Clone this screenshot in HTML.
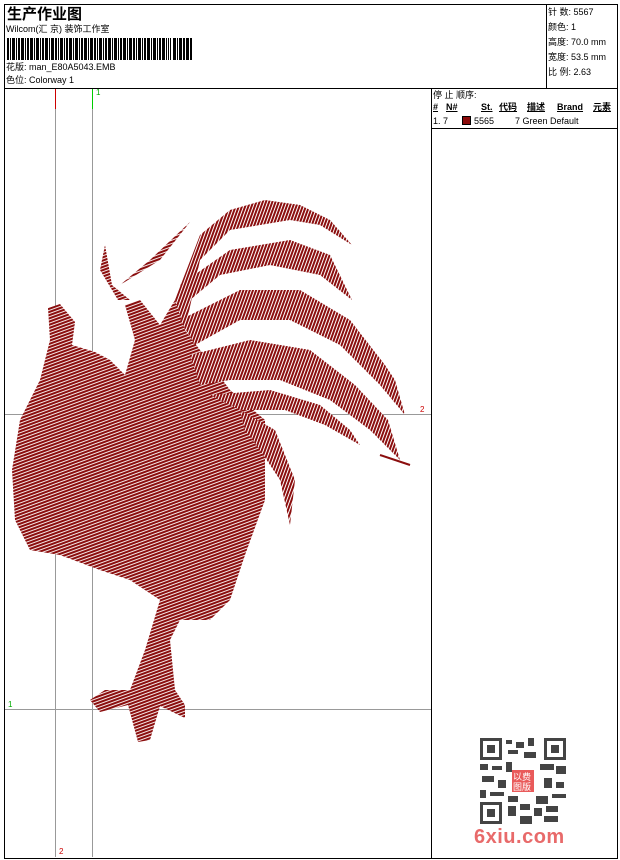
<!DOCTYPE html>
<html><head><meta charset="utf-8"><style>
body{margin:0;background:#fff;width:620px;height:860px;position:relative;overflow:hidden;font-family:"Liberation Sans","Noto Sans CJK SC",sans-serif;color:#000}
.a{position:absolute}
.t{font-size:9px;white-space:nowrap;line-height:11px}
.hd span{position:absolute;top:0;font-weight:bold;text-decoration:underline}
</style></head><body>
<div class="a" style="left:4px;top:4px;width:612px;height:853px;border:1px solid #000"></div>
<div class="a" style="left:4px;top:88px;width:613px;height:1px;background:#000"></div>
<div class="a" style="left:546px;top:4px;width:1px;height:84px;background:#000"></div>
<div class="a" style="left:431px;top:88px;width:1px;height:770px;background:#000"></div>
<div class="a" style="left:431px;top:128px;width:186px;height:1px;background:#000"></div>
<div class="a" style="left:7px;top:3px;font-size:15px;font-weight:bold">生产作业图</div>
<div class="a t" style="left:6px;top:24px">Wilcom(汇 京) 装饰工作室</div>
<svg class="a" style="left:7px;top:38px" width="186" height="22">
<g fill="#000">
<rect x="0" width="2" height="22"/><rect x="3" width="1" height="22"/><rect x="5" width="3" height="22"/><rect x="9" width="1" height="22"/><rect x="11" width="2" height="22"/><rect x="14" width="3" height="22"/><rect x="18" width="1" height="22"/><rect x="20" width="2" height="22"/><rect x="23" width="3" height="22"/><rect x="27" width="1" height="22"/><rect x="29" width="3" height="22"/><rect x="33" width="1" height="22"/><rect x="35" width="2" height="22"/><rect x="38" width="3" height="22"/><rect x="42" width="1" height="22"/><rect x="44" width="3" height="22"/><rect x="48" width="2" height="22"/><rect x="51" width="1" height="22"/><rect x="53" width="3" height="22"/><rect x="57" width="1" height="22"/><rect x="59" width="2" height="22"/><rect x="62" width="3" height="22"/><rect x="66" width="1" height="22"/><rect x="68" width="3" height="22"/><rect x="72" width="1" height="22"/><rect x="74" width="2" height="22"/><rect x="77" width="3" height="22"/><rect x="81" width="1" height="22"/><rect x="83" width="3" height="22"/><rect x="87" width="2" height="22"/><rect x="90" width="1" height="22"/><rect x="92" width="3" height="22"/><rect x="96" width="1" height="22"/><rect x="98" width="2" height="22"/><rect x="101" width="3" height="22"/><rect x="105" width="1" height="22"/><rect x="107" width="3" height="22"/><rect x="111" width="1" height="22"/><rect x="113" width="2" height="22"/><rect x="116" width="3" height="22"/><rect x="120" width="1" height="22"/><rect x="122" width="3" height="22"/><rect x="126" width="2" height="22"/><rect x="129" width="1" height="22"/><rect x="131" width="3" height="22"/><rect x="135" width="1" height="22"/><rect x="137" width="2" height="22"/><rect x="140" width="3" height="22"/><rect x="144" width="1" height="22"/><rect x="146" width="3" height="22"/><rect x="150" width="1" height="22"/><rect x="152" width="2" height="22"/><rect x="155" width="3" height="22"/><rect x="159" width="1" height="22"/><rect x="161" width="1" height="22"/><rect x="163" width="1" height="22"/><rect x="166" width="3" height="22"/><rect x="170" width="1" height="22"/><rect x="172" width="3" height="22"/><rect x="176" width="2" height="22"/><rect x="179" width="3" height="22"/><rect x="183" width="2" height="22"/>
</g></svg>
<div class="a t" style="left:6px;top:62px">花版: man_E80A5043.EMB</div>
<div class="a t" style="left:6px;top:75px">色位: Colorway 1</div>
<div class="a t" style="left:548px;top:5px;line-height:15px">针 数: 5567<br>颜色: 1<br>高度: 70.0 mm<br>宽度: 53.5 mm<br>比 例: 2.63</div>
<div class="a t" style="left:433px;top:90px">停 止 顺序:</div>
<div class="a t hd" style="left:0;top:102px;width:620px;height:11px">
<span style="left:433px">#</span><span style="left:446px">N#</span><span style="left:481px">St.</span><span style="left:499px">代码</span><span style="left:527px">描述</span><span style="left:557px">Brand</span><span style="left:593px">元素</span>
</div>
<div class="a t" style="left:433px;top:116px">1. 7</div>
<div class="a" style="left:462px;top:116px;width:9px;height:9px;background:#8b0a0a;border:1px solid #000;box-sizing:border-box"></div>
<div class="a t" style="left:474px;top:116px">5565</div>
<div class="a t" style="left:515px;top:116px">7 Green Default</div>
<!-- grid lines -->
<div class="a" style="left:55px;top:89px;width:1px;height:768px;background:#999"></div>
<div class="a" style="left:55px;top:89px;width:1px;height:20px;background:#c00"></div>
<div class="a" style="left:92px;top:89px;width:1px;height:768px;background:#999"></div>
<div class="a" style="left:92px;top:89px;width:1px;height:20px;background:#0c0"></div>
<div class="a" style="left:5px;top:414px;width:426px;height:1px;background:#999"></div>
<div class="a" style="left:5px;top:709px;width:426px;height:1px;background:#999"></div>
<div class="a t" style="left:96px;top:87px;color:#0a0;font-size:8px">1</div>
<div class="a t" style="left:8px;top:699px;color:#0a0;font-size:8px">1</div>
<div class="a t" style="left:59px;top:846px;color:#c00;font-size:8px">2</div>
<div class="a t" style="left:420px;top:404px;color:#c00;font-size:8px">2</div>
<!-- rooster -->
<svg class="a" style="left:0;top:0" width="431" height="860">
<defs>
<pattern id="h" width="3" height="3" patternUnits="userSpaceOnUse" patternTransform="rotate(70)">
<rect width="3" height="3" fill="#8b0e0e"/><rect x="2" width="1" height="3" fill="#fff" opacity="0.9"/>
</pattern>
<pattern id="h2" width="3" height="3" patternUnits="userSpaceOnUse" patternTransform="rotate(20)">
<rect width="3" height="3" fill="#8b0e0e"/><rect x="2" width="1" height="3" fill="#fff"/>
</pattern>
</defs>
<g fill="url(#h)">
<path d="M48 308 L60 304 L75 322 L72 345 L95 352 L110 360 L125 375 L135 340 L125 305 L140 300 L160 325 L175 300 L185 330 L230 390 L265 420 L265 500 L245 555 L230 600 L210 620 L180 620 L170 640 L175 690 L185 705 L185 718 L160 706 L150 740 L138 742 L128 705 L100 712 L90 700 L105 690 L130 690 L145 650 L160 600 L130 580 L100 570 L60 555 L30 550 L15 520 L12 470 L20 420 L40 380 L50 340 Z"/>
<path d="M105 245 L100 270 L118 300 L130 300 L112 285 Z"/>
<path d="M120 285 L150 260 L190 222 L160 260 Z"/>
</g>
<g fill="url(#h2)">
<path d="M175 300 L200 235 L230 210 L265 200 L300 205 L330 220 L352 245 L320 225 L290 220 L230 230 L200 260 L185 330 Z"/>
<path d="M180 285 L230 250 L290 240 L330 255 L352 300 L320 275 L270 265 L220 275 L190 300 Z"/>
<path d="M180 320 L240 290 L300 290 L350 320 L385 365 L395 380 L405 415 L380 385 L340 345 L290 320 L240 320 L195 345 Z"/>
<path d="M190 355 L250 340 L310 350 L355 385 L388 420 L400 460 L370 430 L330 400 L280 380 L230 380 L200 385 Z"/>
<path d="M210 395 L270 390 L320 405 L350 430 L360 445 L325 425 L285 410 L240 410 Z"/>
<path d="M240 410 L275 430 L295 480 L290 525 L280 480 L260 450 L245 430 Z"/>
</g>
<path d="M380 455 L410 465" stroke="#8b0e0e" stroke-width="2"/>
</svg>
<!-- QR -->
<svg class="a" style="left:480px;top:738px" width="86" height="86">
<rect width="86" height="86" fill="#fff"/>
<g fill="#444">
<rect x="0" y="0" width="22" height="22"/><rect x="64" y="0" width="22" height="22"/><rect x="0" y="64" width="22" height="22"/>
</g>
<g fill="#fff"><rect x="3" y="3" width="16" height="16"/><rect x="67" y="3" width="16" height="16"/><rect x="3" y="67" width="16" height="16"/></g>
<g fill="#444"><rect x="7" y="7" width="8" height="8"/><rect x="71" y="7" width="8" height="8"/><rect x="7" y="71" width="8" height="8"/>
<rect x="26" y="2" width="6" height="4"/><rect x="36" y="4" width="8" height="6"/><rect x="48" y="0" width="6" height="8"/><rect x="28" y="12" width="10" height="4"/><rect x="44" y="14" width="12" height="6"/>
<rect x="0" y="26" width="8" height="6"/><rect x="12" y="28" width="10" height="4"/><rect x="26" y="24" width="6" height="10"/><rect x="60" y="26" width="14" height="6"/><rect x="76" y="28" width="10" height="8"/>
<rect x="2" y="38" width="12" height="6"/><rect x="18" y="42" width="8" height="8"/><rect x="64" y="40" width="8" height="10"/><rect x="76" y="44" width="8" height="6"/>
<rect x="0" y="52" width="6" height="8"/><rect x="10" y="54" width="14" height="4"/><rect x="28" y="58" width="10" height="6"/><rect x="56" y="58" width="12" height="8"/><rect x="72" y="56" width="14" height="4"/>
<rect x="28" y="68" width="8" height="10"/><rect x="40" y="66" width="10" height="6"/><rect x="54" y="70" width="8" height="8"/><rect x="66" y="68" width="12" height="6"/><rect x="40" y="78" width="12" height="8"/><rect x="64" y="78" width="14" height="6"/></g>
<rect x="32" y="32" width="22" height="22" fill="#e95a5a"/>
<text x="33" y="42" font-size="9" fill="#fff" font-family="Noto Sans CJK SC">以费</text>
<text x="33" y="52" font-size="9" fill="#fff" font-family="Noto Sans CJK SC">图版</text>
</svg>
<div class="a" style="left:474px;top:826px;font-size:20px;font-weight:bold;color:#e86a6a;letter-spacing:0.5px">6xiu.com</div>
</body></html>
